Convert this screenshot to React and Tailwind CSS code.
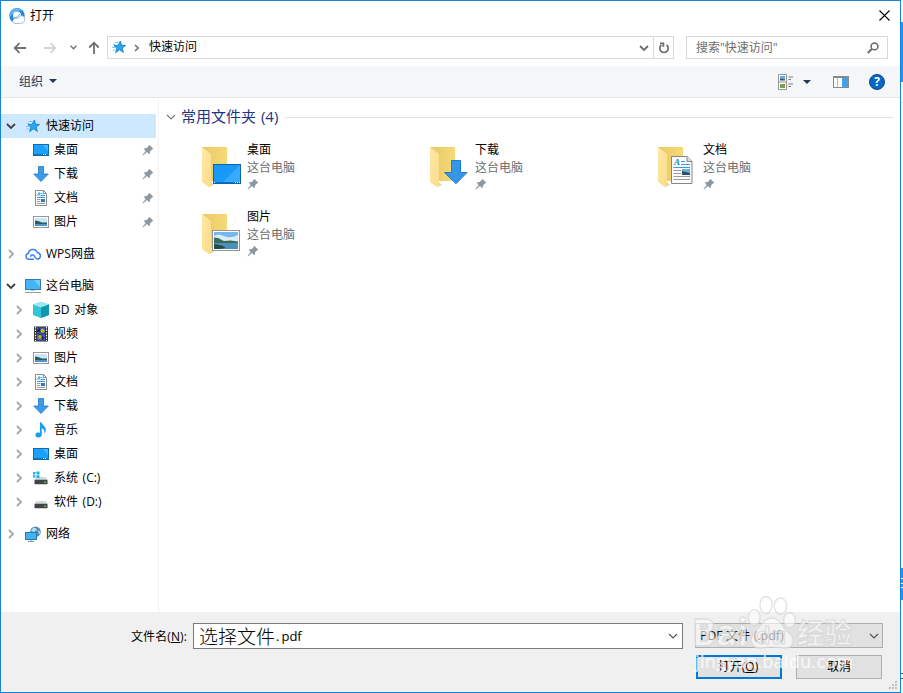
import { useState } from "react";

const UI_FONT = "font-['Open_Sans','Noto_Sans_CJK_SC',sans-serif]";

/* ---------- small icons ---------- */

function Chevron({ dir = "right", className = "" }) {
  return (
    <svg viewBox="0 0 10 10" fill="none" stroke="currentColor" className={`h-[10px] w-[10px] ${className}`}>
      <path d={dir === "right" ? "M3 1 L7 5 L3 9" : "M1 3 L5 7 L9 3"} strokeWidth="1.8" />
    </svg>
  );
}

function ThinChevron({ className = "" }) {
  return (
    <svg viewBox="0 0 12 12" fill="none" stroke="currentColor" className={`h-3 w-3 ${className}`}>
      <path d="M2 4 L6 8 L10 4" strokeWidth="1.1" />
    </svg>
  );
}

function Triangle() {
  return (
    <svg viewBox="0 0 8 4" className="h-1 w-2">
      <path d="M0 0H8L4 4Z" fill="#1e395b" />
    </svg>
  );
}

function PinIcon() {
  return (
    <svg viewBox="0 0 12 12" className="h-3 w-3 shrink-0">
      <path d="M7.2 .8 L11.4 4.8 L10 5.6 L8 7.6 L7.6 10.4 L4.9 8.1 L1 11.4 L.5 11 L3.6 7 L1.6 4.5 L4.6 4.1 L6.5 2.2Z" fill="#8b98a1" />
    </svg>
  );
}

function StarIcon() {
  return (
    <svg viewBox="0 0 16 16" className="h-4 w-4">
      <path d="M9.4 2 L10.4 6.1 L14.6 6.5 L11.2 8.9 L12.4 13.4 L8.6 10.8 L4.6 13.6 L5.9 9.4 L3 6.6 L7.2 6.2Z" fill="#2ba6ee" stroke="#1583c7" strokeWidth=".9" />
      <path d="M3.5 3.5H7.5 M2 5.5H4 M1 8.5H4.5 M1.5 11H4.5" stroke="#76c4f2" strokeWidth=".9" />
    </svg>
  );
}

function DesktopIcon() {
  return (
    <svg viewBox="0 0 16 16" className="h-4 w-4">
      <rect x=".5" y="2.5" width="15" height="11" fill="#1ba0fb" stroke="#0b6cab" />
      <path d="M10 3H15V9Z" fill="#4bb6fc" />
      <path d="M1 12.5H15" stroke="#1673b5" />
      <path d="M10 12.5H11 M12 12.5H13" stroke="#fff" />
    </svg>
  );
}

function DownloadIcon() {
  return (
    <svg viewBox="0 0 16 16" className="h-4 w-4">
      <path d="M5.5 .5H10.5V8H15.3L8 15.5L.7 8H5.5Z" fill="#3a9bea" stroke="#2278c2" strokeWidth=".8" />
    </svg>
  );
}

function DocIcon() {
  return (
    <svg viewBox="0 0 16 16" className="h-4 w-4">
      <path d="M2.5 .5H10.5L13.5 3.5V15.5H2.5Z" fill="#fff" stroke="#8c8c8c" />
      <path d="M10.5 .5V3.5H13.5" fill="none" stroke="#8c8c8c" />
      <path d="M4 5.8L6.2 2.5V5.8 M7.5 3.5H9.5 M7.5 5.5H12" fill="none" stroke="#2a97d8" strokeWidth="1" />
      <path d="M4 7.5H12" stroke="#2a97d8" />
      <path d="M4 9.5H7.5 M4 11.5H7.5 M4 13.5H12" stroke="#8e9da7" />
      <rect x="8" y="9" width="4" height="3" fill="#2d7eb1" />
    </svg>
  );
}

function PictureIcon() {
  return (
    <svg viewBox="0 0 16 16" className="h-4 w-4">
      <rect x=".5" y="2.5" width="15" height="11" fill="#fff" stroke="#979797" />
      <rect x="2" y="4" width="12" height="8" fill="#cbe6f8" />
      <path d="M2 6.5L5 7L9 8.5H14V10H2Z" fill="#2c5c62" />
      <rect x="2" y="10" width="12" height="2" fill="#4d97c9" />
    </svg>
  );
}

function CloudIcon() {
  return (
    <svg viewBox="0 0 16 16" fill="none" stroke="#3e7ff0" strokeWidth="1.5" strokeLinecap="round" className="h-4 w-4">
      <path d="M8.5 13.3H3.9A3.1 3.1 0 0 1 3.4 7.2A4.6 4.6 0 0 1 12.2 6.4A3.5 3.5 0 0 1 12.6 13.3C10.3 13.3 10.4 10.6 8.6 9.2A2 2 0 0 0 5.8 10.2" />
    </svg>
  );
}

function ComputerIcon() {
  return (
    <svg viewBox="0 0 16 16" className="h-4 w-4">
      <rect x=".5" y="1.500" width="15" height="10" fill="#45b3f7" stroke="#357ca9" />
      <path d="M9 2H15V9Z" fill="#7bcbfa" />
      <path d="M6 12.5H10" stroke="#b5c1c9" />
      <path d="M0 14.5H16" stroke="#8aa0ae" />
    </svg>
  );
}

function CubeIcon() {
  return (
    <svg viewBox="0 0 16 16" className="h-4 w-4">
      <path d="M8 0L16 2.6V13L8 16L0 13V2.6Z" fill="#35c5d8" />
      <path d="M0 2.6L8 0L16 2.6L8 5.5Z" fill="#9be8ef" />
      <path d="M8 5.5L16 2.6V13L8 16Z" fill="#1097ae" />
    </svg>
  );
}

function VideoIcon() {
  return (
    <svg viewBox="0 0 16 16" className="h-4 w-4">
      <rect x="1" y=".5" width="14" height="15" fill="#2e2e2e" />
      <path d="M2.5 1V15 M13.5 1V15" stroke="#fff" strokeWidth="1.2" strokeDasharray="1.4 1.2" />
      <rect x="4" y="1.5" width="8" height="6" fill="#365fb4" />
      <rect x="4" y="8.5" width="8" height="6" fill="#4169ba" />
      <path d="M4 4L7 2L8 6H4Z M8 9L12 12L9 14Z" fill="#2c204a" />
      <circle cx="9.5" cy="4.7" r="2" fill="#dcae26" />
      <circle cx="7" cy="11" r="1.8" fill="#d6a32c" />
    </svg>
  );
}

function MusicIcon() {
  return (
    <svg viewBox="0 0 16 16" className="h-4 w-4">
      <path d="M7 .3H8.5C8.8 3 12.8 4.2 12.8 7.8C12.8 9.4 12 10.6 11.2 11.4C11.7 8.5 10.8 6.9 8.7 6.3V12.8A3.2 2.6 0 1 1 7 10.7Z" fill="#159df0" />
    </svg>
  );
}

function DriveIcon({ system }) {
  return (
    <svg viewBox="0 0 16 16" className="h-4 w-4">
      <path d="M3.5 7H12.5L15 10H1Z" fill="#d6d9db" />
      <rect x="1.500" y="9.8" width="13" height="4.5" rx=".7" fill="#404445" />
      <rect x="11" y="11.5" width="2" height="1.2" fill="#47e34f" />
      {system && (
        <g>
          <rect x="-.5" y="1" width="7" height="7" fill="#fff" />
          <path d="M0 2H2.5V4.4H0Z M3.5 1.5H6.5V4.4H3.5Z M0 5.2H2.5V7.5H0Z M3.5 5.2H6.5V8H3.5Z" fill="#13b3ef" />
        </g>
      )}
    </svg>
  );
}

function NetworkIcon() {
  return (
    <svg viewBox="0 0 16 16" className="h-4 w-4">
      <circle cx="10.5" cy="5.8" r="5.3" fill="#4f8fb5" />
      <path d="M8 2Q11 1 12 4L9 6L6 5Z M13 4L15.5 6L14 9Z" fill="#b1dced" />
      <rect x=".5" y="6.5" width="11" height="7" fill="#43b1f5" stroke="#2c78ab" />
      <path d="M3 15.5H9 M6 14V15" stroke="#8198a7" />
    </svg>
  );
}

/* ---------- folder tiles ---------- */

const OVERLAYS = {
  desktop: (
    <g>
      <rect x="11.5" y="17.5" width="27" height="19" fill="#1899f8" stroke="#0a66a8" />
      <path d="M20 36L38 18V36Z" fill="#38a9fb" />
      <path d="M12 35.5H38" stroke="#0b6fba" />
      <path d="M33 35.5H34 M35 35.5H36 M37 35.5H38 M12 35.5H13" stroke="#fff" />
    </g>
  ),
  download: <path d="M21.5 13.5H30.5V25.5H37L26 36.7L14.5 25.5H21.5Z" fill="#3497e7" stroke="#1f7bcb" />,
  document: (
    <g>
      <path d="M13.5 9.5H29L34 14.5V36.5H13.5Z" fill="#fafafa" stroke="#858585" />
      <path d="M29 9.5V14.5H34" fill="#ddd" stroke="#858585" />
      <text x="16" y="18" fontSize="9" fontWeight="700" fontStyle="italic" fontFamily="Liberation Serif" fill="#1781c5">A</text>
      <path d="M23 14.5H27 M23 17.5H32 M15.5 20.5H32" stroke="#329ddb" />
      <path d="M15.5 23.5H23 M15.5 26.5H23 M15.5 29.5H32 M15.5 32.5H32" stroke="#9a9a9a" />
      <rect x="24" y="22" width="8" height="6" fill="#6ab0dc" />
      <path d="M24 24L32 26V28H24Z" fill="#2c506b" />
    </g>
  ),
  picture: (
    <g>
      <rect x="10.5" y="16.5" width="27" height="20" fill="#fff" stroke="#939393" />
      <rect x="12" y="18" width="24" height="17" fill="#76b6ee" />
      <path d="M12 22Q16 19 22 22T36 21V28H12Z" fill="#d9edf7" />
      <path d="M12 23.500L16 24L22 27L29 26.500L36 27.500V29H12Z" fill="#3a6b58" />
      <rect x="12" y="29" width="24" height="6" fill="#4b90bd" />
      <path d="M12 30L20 31.500L24 34L18 35H12Z" fill="#234c46" />
    </g>
  ),
};

function FolderIcon({ kind }) {
  return (
    <svg viewBox="0 0 40 42" className="h-[42px] w-[40px] shrink-0">
      <defs>
        <linearGradient id={`back-${kind}`} x1="0" x2="1">
          <stop offset="0" stopColor="#e9c965" />
          <stop offset="1" stopColor="#f6d978" />
        </linearGradient>
        <linearGradient id={`front-${kind}`} x1="0" x2="1" y2="1">
          <stop offset="0" stopColor="#fee9a5" />
          <stop offset="1" stopColor="#fbdc88" />
        </linearGradient>
      </defs>
      <path d="M7 40L12 38L9 35Z" fill="#d5d5d5" />
      <path d="M0 0H25V34H8Z" fill={`url(#back-${kind})`} />
      <path d="M0 0L9 7V38.5Q9 41 7 40L0 35Z" fill={`url(#front-${kind})`} />
      {OVERLAYS[kind]}
    </svg>
  );
}

/* ---------- data ---------- */

const TREE = [
  {
    label: "快速访问",
    icon: <StarIcon />,
    open: true,
    children: [
      { label: "桌面", icon: <DesktopIcon />, pinned: true },
      { label: "下载", icon: <DownloadIcon />, pinned: true },
      { label: "文档", icon: <DocIcon />, pinned: true },
      { label: "图片", icon: <PictureIcon />, pinned: true },
    ],
  },
  { label: "WPS网盘", icon: <CloudIcon />, children: [] },
  {
    label: "这台电脑",
    icon: <ComputerIcon />,
    open: true,
    children: [
      { label: "3D 对象", icon: <CubeIcon /> },
      { label: "视频", icon: <VideoIcon /> },
      { label: "图片", icon: <PictureIcon /> },
      { label: "文档", icon: <DocIcon /> },
      { label: "下载", icon: <DownloadIcon /> },
      { label: "音乐", icon: <MusicIcon /> },
      { label: "桌面", icon: <DesktopIcon /> },
      { label: "系统 (C:)", icon: <DriveIcon system /> },
      { label: "软件 (D:)", icon: <DriveIcon /> },
    ],
  },
  { label: "网络", icon: <NetworkIcon />, children: [] },
];

const FOLDERS = [
  { name: "桌面", kind: "desktop" },
  { name: "下载", kind: "download" },
  { name: "文档", kind: "document" },
  { name: "图片", kind: "picture" },
];

/* ---------- dialog parts ---------- */

function TitleBar() {
  return (
    <div className="flex h-[30px] shrink-0 items-center pr-[10px] pl-2">
      <svg viewBox="0 0 16 16" className="h-4 w-4">
        <circle cx="8" cy="7.800" r="7.7" fill="#2386dc" />
        <path d="M1 6A7.5 7.5 0 0 1 14 3Q7 1 1 9Z" fill="#65b7f2" />
        <circle cx="8" cy="7.5" r="4" fill="#fff" />
        <path d="M3.500 13Q5 9.500 9 10.500L11 8Q15.500 6.500 15.700 12Q15.5 15.5 12 15.5H6Q3.500 15 3.500 13Z" fill="#f8fbff" stroke="#8fb0d6" strokeWidth=".7" />
        <path d="M5 9Q8 11 11 6" fill="none" stroke="#6faae0" />
      </svg>
      <span className="ml-[5px] text-xs text-black">打开</span>
      <svg viewBox="0 0 11 11" stroke="#000" strokeWidth="1.1" className="mb-[2px] ml-auto h-[11px] w-[11px]">
        <path d="M.5 .5L10.5 10.5 M10.5 .5L.5 10.5" />
      </svg>
    </div>
  );
}

function NavBar() {
  return (
    <div className="flex h-[35px] shrink-0 items-start pt-[5px] pr-3">
      <div className="flex h-[23px] w-[106px] shrink-0 items-center pl-3 text-[#707070]">
        <svg viewBox="0 0 14 12" fill="none" stroke="currentColor" strokeWidth="1.8" className="h-3 w-[14px]">
          <path d="M13 6H2 M6.5 1.2L1.7 6L6.5 10.8" />
        </svg>
        <svg viewBox="0 0 14 12" fill="none" stroke="#d4d4d4" strokeWidth="1.8" className="ml-4 h-3 w-[14px]">
          <path d="M1 6H12 M7.5 1.2L12.3 6L7.5 10.8" />
        </svg>
        <svg viewBox="0 0 7 5" fill="none" stroke="currentColor" strokeWidth="1.4" className="ml-[13px] h-[5px] w-[7px]">
          <path d="M.6 .8L3.5 3.7L6.4 .8" />
        </svg>
        <svg viewBox="0 0 12 13" fill="none" stroke="currentColor" strokeWidth="1.8" className="ml-[11px] h-[13px] w-3">
          <path d="M6 13V2 M1.2 6.5L6 1.7L10.8 6.5" />
        </svg>
      </div>
      <div className="flex h-[23px] w-[567px] shrink-0 items-center border border-[#d9d9d9]">
        <span className="mb-[2px] ml-[3px]">
          <StarIcon />
        </span>
        <svg viewBox="0 0 6 8" fill="none" stroke="#6d6d6d" strokeWidth="1.6" className="ml-[7px] h-2 w-[6px]">
          <path d="M1 1L4.2 4L1 7" />
        </svg>
        <span className="-mt-[2px] ml-[9px] text-xs text-black">快速访问</span>
        <Chevron dir="down" className="mr-1 ml-auto text-[#6d6d6d]" />
        <div className="flex h-full w-[20px] items-center justify-center border-l border-[#d9d9d9]">
          <svg viewBox="0 0 12 12" fill="none" stroke="#6d6d6d" strokeWidth="1.7" className="h-3 w-3">
            <path d="M8.6 3A4.2 4.2 0 1 1 3.4 3" />
            <path d="M2 1.3H5.4V5" />
          </svg>
        </div>
      </div>
      <div className="ml-3 flex h-[23px] w-[202px] shrink-0 items-center border border-[#d9d9d9] pr-[8px] pl-[9px]">
        <span className="text-xs text-[#6d6d6d]">搜索"快速访问"</span>
        <svg viewBox="0 0 12 12" fill="none" stroke="#6d6d6d" className="ml-auto h-3 w-3">
          <circle cx="7.5" cy="4.4" r="3.4" strokeWidth="1.6" />
          <path d="M5 6.8L.8 11" strokeWidth="2" />
        </svg>
      </div>
    </div>
  );
}

function Toolbar() {
  return (
    <div className="flex h-8 shrink-0 items-center border-b border-[#e5e5e7] bg-[#f4f6f8] pr-[15px] pl-[18px]">
      <span className="text-xs text-[#1e395b]">组织</span>
      <span className="ml-[6px] pb-px">
        <Triangle />
      </span>
      <div className="ml-auto flex items-center">
        <svg viewBox="0 0 16 16" className="h-4 w-4">
          <path d="M.5 .5H8.5V15.5H.5Z M.5 8H8.5" fill="#fff" stroke="#969696" />
          <rect x="2" y="2" width="5" height="4" fill="#69a9dc" />
          <path d="M2 4.5L7 5.5V6.5H2Z" fill="#265379" />
          <rect x="2" y="10" width="5" height="4" fill="#61a857" />
          <path d="M4.5 10H7V12H4.5Z" fill="#d4792b" />
          <path d="M10.5 3H15 M10.5 5.5H13 M10.5 10H15 M10.5 12.5H13" stroke="#7b7b7b" />
        </svg>
        <span className="mr-px ml-[9px]">
          <Triangle />
        </span>
        <svg viewBox="0 0 16 12" className="ml-[21px] h-3 w-4">
          <rect x=".5" y=".5" width="15" height="11" fill="#fff" stroke="#858a90" />
          <path d="M0 1H16" stroke="#858a90" strokeWidth="2" />
          <path d="M4.5 2V11" stroke="#b5bac0" />
          <rect x="9" y="2" width="6" height="9" fill="#43a1e8" />
        </svg>
        <svg viewBox="0 0 16 16" className="ml-5 h-4 w-4">
          <circle cx="8" cy="8" r="7.5" fill="#0567c6" stroke="#094881" />
          <text x="8" y="12.4" textAnchor="middle" fontSize="12" fontWeight="700" fontFamily="Open Sans" fill="#fff">
            ?
          </text>
        </svg>
      </div>
    </div>
  );
}

function Sidebar({ selected, onSelect }) {
  return (
    <div className="flex w-[158px] shrink-0 flex-col gap-2 border-r border-[#f2f2f2] pt-4 [word-spacing:1.5px]">
      {TREE.map((group) => (
        <div key={group.label}>
          <div
            onClick={() => onSelect(group.label)}
            className={`flex h-6 w-[155px] items-center pl-[5px] ${selected === group.label ? "bg-[#cde8ff]" : ""}`}
          >
            <Chevron dir={group.open ? "down" : "right"} className={group.open ? "text-[#404040]" : "text-[#a6a6a6]"} />
            <span className="ml-[9px]">{group.icon}</span>
            <span className="ml-[5px] text-xs whitespace-nowrap">{group.label}</span>
          </div>
          {group.children.map((item) => (
            <div key={item.label} className="flex h-6 w-[155px] items-center pr-[2px] pl-[13px]">
              <Chevron className={item.pinned ? "invisible" : "text-[#a6a6a6]"} />
              <span className="ml-[9px]">{item.icon}</span>
              <span className="mr-auto ml-[5px] text-xs whitespace-nowrap">{item.label}</span>
              {item.pinned && <PinIcon />}
            </div>
          ))}
        </div>
      ))}
    </div>
  );
}

function FolderPane() {
  return (
    <div className="min-w-0 flex-1 pt-[9px] pr-[7px] pl-[6px]">
      <div className="flex h-5 items-center">
        <ThinChevron className="text-[#7a7a7a]" />
        <span className="-mt-[2px] ml-1 text-[15px] leading-5 whitespace-nowrap text-[#1e3287] [word-spacing:1px]">
          常用文件夹 (4)
        </span>
        <div className="ml-[7px] h-px flex-1 bg-[#e2e2e2]" />
      </div>
      <div className="mt-[11px] ml-[37px] grid grid-cols-[228px_228px_228px]">
        {FOLDERS.map((folder) => (
          <div key={folder.name} className="flex h-[67px] items-start">
            <div className="pt-[9px]">
              <FolderIcon kind={folder.kind} />
            </div>
            <div className="ml-[5px] pt-[3px] text-xs leading-[18px]">
              <div>{folder.name}</div>
              <div className="text-[#6d6d6d]">这台电脑</div>
              <div className="pt-[1px]">
                <PinIcon />
              </div>
            </div>
          </div>
        ))}
      </div>
    </div>
  );
}

function Watermark() {
  return (
    <svg viewBox="0 0 180 92" className="pointer-events-none absolute top-[589px] left-[684px] h-[92px] w-[180px]">
      <g
        fill="#fff"
        fillOpacity=".6"
        stroke="#d6d6d6"
        strokeOpacity=".75"
        strokeWidth="1.3"
        fontFamily="Open Sans, Noto Sans CJK SC, sans-serif"
        fontWeight="700"
      >
        <text x="7" y="56" fontSize="37" textLength="56" lengthAdjust="spacingAndGlyphs">Bai</text>
        <ellipse cx="81" cy="15" rx="6" ry="8.500" />
        <ellipse cx="95.500" cy="16" rx="6.300" ry="8" />
        <ellipse cx="69.300" cy="27.500" rx="5.800" ry="7.800" />
        <ellipse cx="104.500" cy="30" rx="5.800" ry="7.500" />
        <path d="M87 28C95 28 97 37 103 42C112 49 108 59 99 58C91 57 83 57 77 58C66 59 63 49 70 42C76 36 79 28 87 28Z" />
        <text x="112" y="54" fontSize="28" textLength="55" lengthAdjust="spacingAndGlyphs">经验</text>
      </g>
      <text x="71" y="54" fontSize="23" fontWeight="700" textLength="30" fontFamily="Open Sans" fill="none" stroke="#d0d0d0" strokeOpacity=".8">
        du
      </text>
      <text x="10" y="78" fontSize="17.500" textLength="158" fontFamily="Open Sans" fill="#fff" fillOpacity=".7" stroke="#fff" strokeOpacity=".45" strokeWidth=".6">
        jingyan.baidu.com
      </text>
    </svg>
  );
}

function Footer({ filename, onChange }) {
  return (
    <div className="flex h-20 shrink-0 flex-col bg-[#f0f0f0] pt-[11px]">
      <div className="flex h-[26px]">
        <label className="w-[192px] pr-[6px] text-right text-xs leading-[27px] tracking-[0.1px]">
          文件名(<span className="underline">N</span>):
        </label>
        <div className="flex w-[490px] items-center border border-[#7a7a7a] bg-white pr-[3px] pl-[5px]">
          <input
            value={filename}
            onChange={onChange}
            className="w-[77px] bg-transparent pb-px font-['Noto_Sans_CJK_SC',sans-serif] text-[19px] leading-6 font-light outline-none"
          />
          <span className="pt-[2px] text-[13px]">
            .<span className="ml-[2px]">pdf</span>
          </span>
          <ThinChevron className="ml-auto text-[#505050]" />
        </div>
        <div className="ml-3 flex h-[25px] w-[188px] items-center border border-[#adadad] bg-[#e1e1e1] pr-[2px] pl-1 text-xs tracking-[0.2px]">
          PDF 文件 (.pdf)
          <ThinChevron className="ml-auto text-[#505050]" />
        </div>
      </div>
      <div className="mt-[6px] flex pl-[695px] text-xs">
        <button className="h-6 w-[86px] border-2 border-[#0078d7] bg-[#e1e1e1] pr-[2px]">
          打开(<span className="underline">O</span>)
        </button>
        <button className="ml-[14px] h-6 w-[86px] border border-[#adadad] bg-[#e1e1e1]">取消</button>
        <svg viewBox="0 0 9 9" fill="#bfbfbf" className="mt-[26px] ml-[7px] h-[9px] w-[9px]">
          <path d="M6 0H8V2H6Z M3 3H5V5H3Z M6 3H8V5H6Z M0 6H2V8H0Z M3 6H5V8H3Z M6 6H8V8H6Z" />
        </svg>
      </div>
    </div>
  );
}

export default function App() {
  const [selected, setSelected] = useState("快速访问");
  const [filename, setFilename] = useState("选择文件");

  return (
    <div className={`flex h-[693px] w-[903px] overflow-hidden bg-white text-black ${UI_FONT}`}>
      <div className="relative flex w-[901px] shrink-0 flex-col border border-[#1883d7] bg-white">
        <TitleBar />
        <NavBar />
        <Toolbar />
        <div className="flex min-h-0 flex-1">
          <Sidebar selected={selected} onSelect={setSelected} />
          <FolderPane />
        </div>
        <Footer filename={filename} onChange={(event) => setFilename(event.target.value)} />
        <Watermark />
      </div>
      {/* sliver of the window behind */}
      <div className="flex w-[2px] flex-col pt-[22px]">
        <div className="h-[60px] bg-[#2b8ff0]" />
        <div className="mt-5 h-px bg-[#e2e2e2]" />
        <div className="mt-[465px] h-8 bg-[#2b8ff0] pt-[10px]">
          <div className="h-px bg-white" />
          <div className="mt-1 h-px bg-white" />
          <div className="mt-[3px] h-px bg-white" />
        </div>
        <div className="mt-[73px] h-px bg-[#46627f]" />
        <div className="mt-1 h-px bg-[#46627f]" />
      </div>
    </div>
  );
}
